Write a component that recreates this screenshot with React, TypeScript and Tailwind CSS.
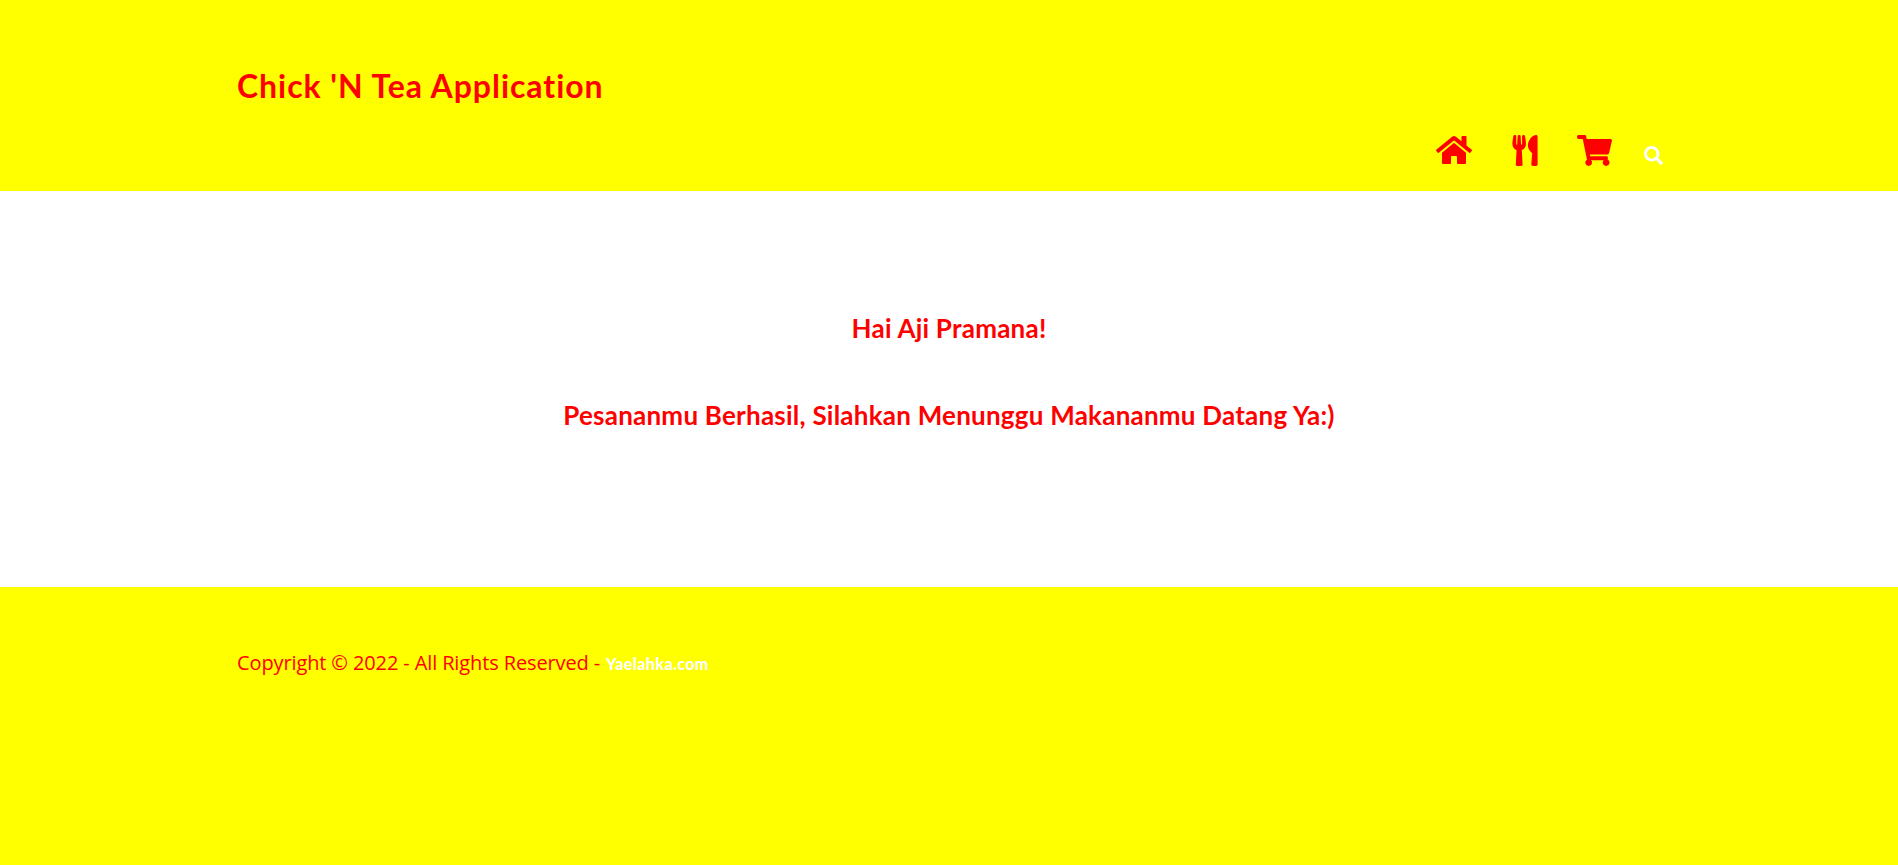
import { FaHome, FaUtensils, FaShoppingCart, FaSearch } from 'react-icons/fa'

export default function App() {
    return (
        <div className="min-h-[865px] flex flex-col bg-white font-['Lato',sans-serif] text-[#ff0000]">
            {/* Header */}
            <header className="h-[191px] bg-[#ffff00] pl-[237px] pr-[235px] flex flex-col">
                <h1 className="mt-[66px] h-[40px] text-[32px] leading-[40px] font-bold tracking-[0.95px]">Chick 'N Tea Application</h1>
                <nav className="mt-[28px] flex items-center justify-end">
                    <a className="w-[36px] mr-[40px]"><FaHome className="w-[36px] h-[32px]" /></a>
                    <a className="w-[26px] mr-[39px]"><FaUtensils className="w-[26px] h-[31px]" /></a>
                    <a className="w-[35px] mr-[32px]"><FaShoppingCart className="w-[35px] h-[31px]" /></a>
                    <a className="w-[19px] text-white"><FaSearch className="w-[19px] h-[19px] mt-[10px]" /></a>
                </nav>
            </header>

            {/* Message */}
            <main className="h-[396px] flex flex-col items-center pt-[121px] font-bold text-[26px] leading-[32px] tracking-[0.23px]">
                <h3>Hai Aji Pramana!</h3>
                <h3 className="mt-[55px]">Pesananmu Berhasil, Silahkan Menunggu Makananmu Datang Ya:)</h3>
            </main>

            {/* Footer */}
            <footer className="flex-1 bg-[#ffff00] pl-[237px] pt-[64px]">
                <p className="flex items-center h-[24px] font-['Open_Sans',sans-serif] text-[20px] leading-[24px] tracking-[-0.12px]">
                    Copyright © 2022 - All Rights Reserved -
                    <a className="ml-[6px] mt-[2px] font-['Lato',sans-serif] font-black text-white text-[16px] tracking-[0.4px]">Yaelahka.com</a>
                </p>
            </footer>
        </div>
    )
}
